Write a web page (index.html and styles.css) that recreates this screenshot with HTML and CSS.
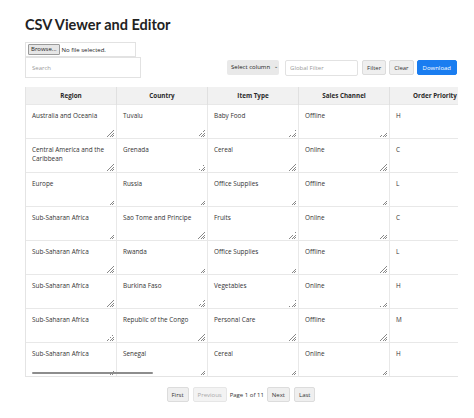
FILE: index.html
```html
<!DOCTYPE html>
<html lang="en">
<head>
<meta charset="utf-8">
<title>CSV Viewer and Editor</title>
<link rel="stylesheet" href="styles.css">
</head>
<body>
<div class="app">
  <h1 class="title">CSV Viewer and Editor</h1>
  <div class="file-box">
    <span class="browse">Browse...</span>
    <span class="file-name">No file selected.</span>
  </div>
  <div class="toolbar">
    <input class="search" type="text" placeholder="Search">
    <div class="controls">
      <div class="select">Select column <span class="caret">&#8964;</span></div>
      <input class="filter-input" type="text" placeholder="Global Filter">
      <button class="btn">Filter</button>
      <button class="btn">Clear</button>
      <button class="btn btn-primary">Download</button>
    </div>
  </div>
  <div class="table-wrap">
    <table class="grid">
      <thead>
        <tr><th>Region</th><th>Country</th><th>Item Type</th><th>Sales Channel</th><th>Order Priority</th><th>Order Date</th></tr>
      </thead>
      <tbody>
        <tr><td><textarea>Australia and Oceania</textarea></td><td><textarea>Tuvalu</textarea></td><td><textarea>Baby Food</textarea></td><td><textarea>Offline</textarea></td><td><textarea>H</textarea></td><td><textarea>5/28/2010</textarea></td></tr>
        <tr><td><textarea>Central America and the Caribbean</textarea></td><td><textarea>Grenada</textarea></td><td><textarea>Cereal</textarea></td><td><textarea>Online</textarea></td><td><textarea>C</textarea></td><td><textarea>8/22/2012</textarea></td></tr>
        <tr><td><textarea>Europe</textarea></td><td><textarea>Russia</textarea></td><td><textarea>Office Supplies</textarea></td><td><textarea>Offline</textarea></td><td><textarea>L</textarea></td><td><textarea>5/2/2014</textarea></td></tr>
        <tr><td><textarea>Sub-Saharan Africa</textarea></td><td><textarea>Sao Tome and Principe</textarea></td><td><textarea>Fruits</textarea></td><td><textarea>Online</textarea></td><td><textarea>C</textarea></td><td><textarea>6/20/2014</textarea></td></tr>
        <tr><td><textarea>Sub-Saharan Africa</textarea></td><td><textarea>Rwanda</textarea></td><td><textarea>Office Supplies</textarea></td><td><textarea>Offline</textarea></td><td><textarea>L</textarea></td><td><textarea>2/1/2013</textarea></td></tr>
        <tr><td><textarea>Sub-Saharan Africa</textarea></td><td><textarea>Burkina Faso</textarea></td><td><textarea>Vegetables</textarea></td><td><textarea>Online</textarea></td><td><textarea>H</textarea></td><td><textarea>7/26/2015</textarea></td></tr>
        <tr><td><textarea>Sub-Saharan Africa</textarea></td><td><textarea>Republic of the Congo</textarea></td><td><textarea>Personal Care</textarea></td><td><textarea>Offline</textarea></td><td><textarea>M</textarea></td><td><textarea>7/5/2011</textarea></td></tr>
        <tr><td><textarea>Sub-Saharan Africa</textarea></td><td><textarea>Senegal</textarea></td><td><textarea>Cereal</textarea></td><td><textarea>Online</textarea></td><td><textarea>H</textarea></td><td><textarea>4/18/2014</textarea></td></tr>
      </tbody>
    </table>
    <div class="hscroll"></div>
  </div>
  <div class="pager">
    <button class="btn">First</button>
    <button class="btn" disabled>Previous</button>
    <span class="page-info">Page 1 of 11</span>
    <button class="btn">Next</button>
    <button class="btn">Last</button>
  </div>
</div>
</body>
</html>
```
FILE: styles.css
```css
* { box-sizing: border-box; }
body {
  margin: 0;
  background: #fff;
  font-family: "Open Sans", "Noto Sans", sans-serif;
  color: #333;
}
.app {
  width: 474px;
  padding: 14px 16px 0 25px;
}
.title {
  margin: 0;
  font-family: "Lato", "Open Sans", sans-serif;
  font-size: 14.5px;
  line-height: 21px;
  font-weight: 700;
  color: #222;
}
.file-box {
  margin-top: 7px;
  width: 111px;
  height: 15px;
  border: 1px solid #e2e2e2;
  display: flex;
  align-items: center;
  padding-left: 2px;
  gap: 2px;
  font-size: 6px;
  color: #222;
}
.browse {
  border: 1px solid #9a9a9a;
  background: #e6e6e6;
  padding: 0 2px;
  height: 11px;
  line-height: 9px;
  border-radius: 1px;
}
.toolbar {
  display: flex;
  justify-content: space-between;
  align-items: center;
  width: 432px;
}
.search {
  width: 116px;
  height: 21px;
  border: 1px solid #e2e2e2;
  padding: 0 6px;
  font-family: inherit;
  font-size: 6px;
  color: #333;
  outline: none;
}
.search::placeholder, .filter-input::placeholder { color: #9a9a9a; }
.controls {
  display: flex;
  align-items: center;
  gap: 3px;
}
.select {
  width: 52px;
  height: 15px;
  background: #e9e9e9;
  border-radius: 2px;
  font-size: 6px;
  line-height: 15px;
  padding-left: 4px;
  color: #222;
  margin-right: 3px;
  white-space: nowrap;
}
.caret { font-size: 5px; margin-left: 2px; position: relative; top: -1px; }
.filter-input {
  width: 73px;
  height: 16px;
  border: 1px solid #e2e2e2;
  border-radius: 2px;
  padding: 0 4px;
  font-family: inherit;
  font-size: 6px;
  outline: none;
  margin-right: 1px;
}
.btn {
  height: 15px;
  padding: 0 4px;
  border: 1px solid #dcdcdc;
  background: #efefef;
  border-radius: 2px;
  font-family: inherit;
  font-size: 6px;
  color: #333;
  cursor: pointer;
}
.btn:disabled { color: #a8a8a8; background: #f3f3f3; border-color: #e6e6e6; }
.btn-primary {
  background: #1a7df0;
  border-color: #1a7df0;
  color: #fff;
  padding: 0 5px;
}
.table-wrap {
  position: relative;
  margin-top: 9px;
  width: 433px;
  overflow: hidden;
  border-bottom: 1px solid #e4e4e4;
}
.grid {
  border-collapse: collapse;
  table-layout: fixed;
  width: 546px;
}
.grid th {
  width: 91px;
  height: 17px;
  background: #f1f1f1;
  font-size: 6.3px;
  font-weight: 700;
  color: #2a2a2a;
  text-align: center;
  border-right: 1px solid #e0e0e0;
  padding: 0;
}
.grid td {
  height: 34px;
  padding: 5px 2px 0 5px;
  vertical-align: top;
  border-right: 1px solid #e8e8e8;
  border-top: 1px solid #e8e8e8;
}
.grid th:first-child, .grid td:first-child { border-left: 1px solid #e4e4e4; }
.grid textarea {
  display: block;
  width: 84px;
  height: 28px;
  border: none;
  padding: 1px;
  margin: 0;
  font-family: inherit;
  font-size: 6.4px;
  line-height: 9px;
  color: #333;
  background: transparent;
  overflow: hidden;
  resize: both;
  outline: none;
}
.grid textarea::-webkit-resizer {
  background-color: transparent;
  background-image:
    linear-gradient(135deg, #fff 50%, transparent 50%),
    repeating-linear-gradient(135deg, #888 0 0.8px, #fff 0.8px 1.6px);
  background-size: 7px 7px, 7px 7px;
  background-position: right 1px bottom 1px, right 1px bottom 1px;
  background-repeat: no-repeat;
}
.hscroll {
  position: absolute;
  left: 7px;
  bottom: 2px;
  width: 121px;
  height: 2px;
  border-radius: 1px;
  background: #8d8d8d;
}
.pager {
  display: flex;
  justify-content: center;
  align-items: center;
  gap: 4px;
  margin-top: 10px;
  width: 432px;
}
.page-info { font-size: 6px; color: #333; margin: 0 -1px; }
```
